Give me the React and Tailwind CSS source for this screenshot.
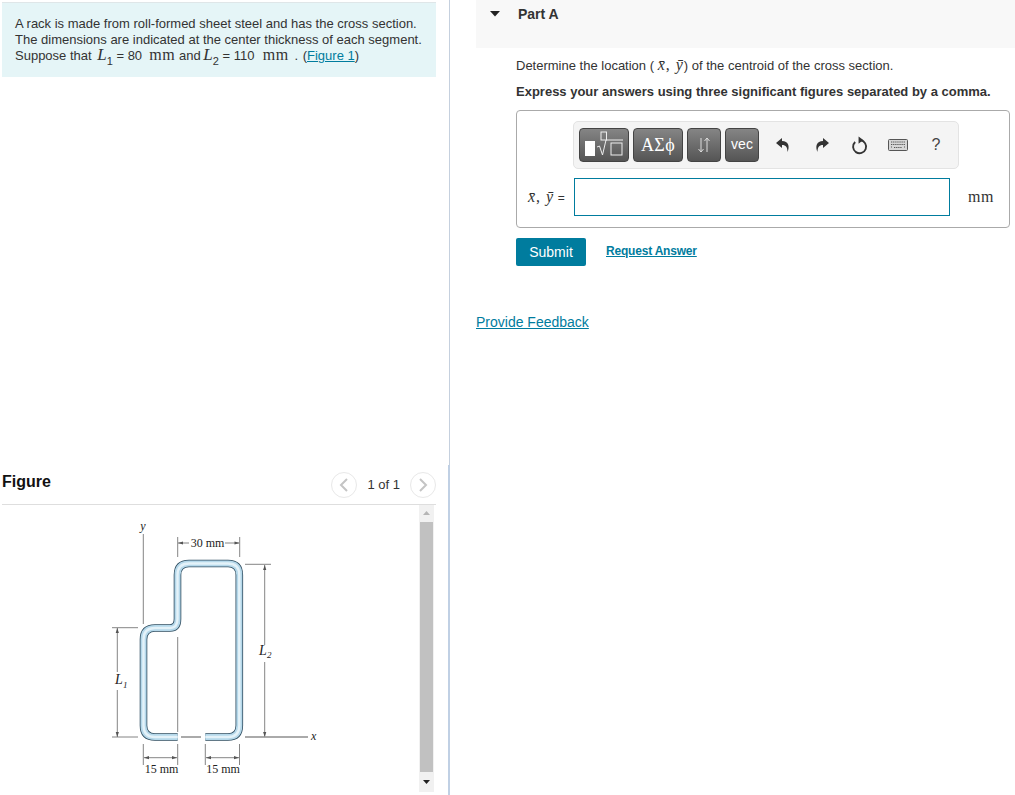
import React from "react";

const sans = "font-['Liberation_Sans',Arial,sans-serif]";
const serif = "font-['Liberation_Serif','Times_New_Roman',serif]";

function Mm({ className = "" }) {
  return <span className={`${serif} text-[16px] leading-none tracking-[0.6px] ${className}`}>mm</span>;
}

function L({ n, className = "" }) {
  return (
    <span className={`${serif} text-[17px] leading-none ${className}`}>
      <i>L</i>
      <sub className={`${sans} text-[11px] align-[-2px] leading-none`}>{n}</sub>
    </span>
  );
}

function XY({ size = "text-[16px]" }) {
  return (
    <span className={`${serif} ${size} tracking-[1px] leading-none`}>
      <i>{"x\u0304"}</i>, <i>{"y\u0304"}</i>
    </span>
  );
}

function Pager({ dir }) {
  return (
    <span className="w-[26px] h-[26px] rounded-full border border-[#e8e8e8] flex items-center justify-center">
      <svg width="12" height="16" viewBox="0 0 12 16" fill="none" stroke="#c4c4c4" strokeWidth="2">
        {dir === "left" ? <polyline points="9,2 3,8 9,14" /> : <polyline points="3,2 9,8 3,14" />}
      </svg>
    </span>
  );
}

function Dim({ d, gray }) {
  return <path d={d} fill="none" stroke={gray ? "#8f8f8f" : "#666"} strokeWidth={gray ? 1.4 : 0.8} />;
}

function Figure() {
  const center =
    "M177.7 737 H155 Q143.5 737 143.5 725.5 V639.5 Q143.5 628 155 628 H170 Q177.5 628 177.5 619 V575 Q177.5 563.5 189 563.5 H228 Q239.3 563.5 239.3 575 V725.5 Q239.3 737 228 737 H205.3";
  const txt = { fontFamily: "'Liberation Serif',serif", fill: "#222" };
  return (
    <svg width="418" height="290" viewBox="0 505 418 290" className="block shrink-0">
      <Dim d="M143.3 534 V624" />
      <Dim d="M177.7 537 V557 M239.7 537 V557 M178 543 H189 M225 543 H239" />
      <path d="M178 543 l5 -1.6 v3.2 z M239.5 543 l-5 -1.6 v3.2 z" fill="#555" />
      <Dim d="M245 564.3 H271 M264.7 565 V645 M264.7 662 V737" />
      <path d="M264.7 565 l-1.6 5 h3.2 z M264.7 737 l-1.6 -5 h3.2 z" fill="#555" />
      <Dim d="M112 627.7 H138 M117.3 628 V672 M117.3 690 V737 M112 737 H138 M177.7 637 V732" />
      <path d="M117.3 628 l-1.6 5 h3.2 z M117.3 737 l-1.6 -5 h3.2 z" fill="#555" />
      <Dim gray d="M181 737 H201 M245 737 H308" />
      <Dim d="M143.3 744 V765 M177.7 744 V765 M205.3 744 V765 M239.5 744 V765 M144 757.7 H177 M206 757.7 H239" />
      <path d="M144 757.7 l5 -1.6 v3.2 z M177 757.7 l-5 -1.6 v3.2 z M206 757.7 l5 -1.6 v3.2 z M239 757.7 l-5 -1.6 v3.2 z" fill="#555" />
      <path d={center} fill="none" stroke="#2f4d60" strokeWidth="7.6" />
      <path d={center} fill="none" stroke="#b5d8ea" strokeWidth="6" />
      <path d={center} fill="none" stroke="#e4f2f9" strokeWidth="2.4" />
      <text x="143" y="530" fontSize="12" fontStyle="italic" textAnchor="middle" style={txt}>y</text>
      <text x="207.5" y="547" fontSize="12" textAnchor="middle" style={txt}>30 mm</text>
      <text x="259" y="655" fontSize="14" fontStyle="italic" style={txt}>L</text>
      <text x="267" y="658" fontSize="9" fontStyle="italic" style={txt}>2</text>
      <text x="115" y="684" fontSize="14" fontStyle="italic" style={txt}>L</text>
      <text x="123" y="688" fontSize="9" fontStyle="italic" style={txt}>1</text>
      <text x="311" y="740" fontSize="12" fontStyle="italic" style={txt}>x</text>
      <text x="161.5" y="773" fontSize="12" textAnchor="middle" style={txt}>15 mm</text>
      <text x="223" y="773" fontSize="12" textAnchor="middle" style={txt}>15 mm</text>
    </svg>
  );
}

function ToolBtn({ className = "", children }) {
  return (
    <span
      className={`h-[34px] rounded-[4px] border border-[#444] bg-gradient-to-b from-[#858585] to-[#555] flex items-center justify-center text-white shrink-0 ${className}`}
    >
      {children}
    </span>
  );
}

function Toolbar() {
  return (
    <div className="ml-[56px] w-[386px] h-[48px] rounded-[5px] border border-[#e3e3e3] bg-[#f4f4f4] flex items-center pl-[5px] text-[#333]">
      <ToolBtn className="w-[50px]">
        <svg width="44" height="30" viewBox="0 0 44 30" fill="none">
          <rect x="3" y="11" width="10" height="15" fill="#fff" />
          <rect x="19" y="2" width="5.5" height="8" stroke="#eee" strokeWidth="1" />
          <path d="M15 17 l2.5 -1 l3 9 l3.5 -15 h17" stroke="#eee" strokeWidth="1" />
          <rect x="29" y="13" width="11" height="12" stroke="#eee" strokeWidth="1" />
        </svg>
      </ToolBtn>
      <ToolBtn className={`w-[50px] ml-[4px] ${serif} text-[18px] tracking-[0.4px] text-[#e4e4e4]`}>ΑΣϕ</ToolBtn>
      <ToolBtn className="w-[34px] ml-[4px]">
        <svg width="16" height="18" viewBox="0 0 16 18" fill="none" stroke="#ddd" strokeWidth="1">
          <path d="M5 2 V16 M2.5 13 L5 16 L7.5 13 M11 16 V2 M8.5 5 L11 2 L13.5 5" />
        </svg>
      </ToolBtn>
      <ToolBtn className={`w-[34px] ml-[4px] text-[14px] ${sans} pb-[2px] text-[#eee]`}>vec</ToolBtn>
      <span className="w-[17px] flex justify-center ml-[15px]">
        <svg width="14" height="16" viewBox="0 0 14 16">
          <path d="M6 1 L0 6 L6 11 V8 C10 8 11.5 10.5 11.5 15 C14 9.5 12.5 4 6 4 Z" fill="#333" />
        </svg>
      </span>
      <span className="w-[17px] flex justify-center ml-[22px]">
        <svg width="14" height="16" viewBox="0 0 14 16" className="-scale-x-100">
          <path d="M6 1 L0 6 L6 11 V8 C10 8 11.5 10.5 11.5 15 C14 9.5 12.5 4 6 4 Z" fill="#333" />
        </svg>
      </span>
      <span className="w-[17px] flex justify-center ml-[21px]">
        <svg width="18" height="20" viewBox="0 0 18 20" fill="none">
          <path d="M10 5 A6.9 6.9 0 1 1 4.4 6.8" stroke="#333" strokeWidth="2" />
          <path d="M8 1 L13 4.8 L8 8.6 Z" fill="#333" />
        </svg>
      </span>
      <span className="w-[20px] flex justify-center ml-[20px]">
        <svg width="20" height="12" viewBox="0 0 20 12">
          <rect x="0.5" y="0.5" width="19" height="11" rx="1" fill="#d6d6d6" stroke="#555" />
          <path d="M3 3 H17 M3 5.5 H17 M3 8 H4 M6 8.5 H14 M16 8 H17" stroke="#555" strokeWidth="1.2" strokeDasharray="1.3 0.8" />
        </svg>
      </span>
      <span className={`ml-[21px] w-[14px] text-center text-[16px] ${sans} text-[#444]`}>?</span>
    </div>
  );
}

export default function App() {
  return (
    <div className={`w-[1015px] h-[795px] overflow-hidden bg-white flex ${sans} text-[#333]`}>
      <div className="w-[450px] h-full shrink-0 relative border-r border-[#c5d0de] pt-[2px]">
        <div className="ml-[2px] w-[434px] h-[75px] bg-[#e5f5f7] border-t border-[#dfe6e8] pl-[13px] pt-[13px] text-[13px] leading-[16px]">
          <p className="h-[16px]">A rack is made from roll-formed sheet steel and has the cross section.</p>
          <p className="h-[16px]">The dimensions are indicated at the center thickness of each segment.</p>
          <p className="h-[16px] -mt-[2px] whitespace-nowrap">
            Suppose that <L n="1" className="ml-[2px]" /> = 80 &nbsp;<Mm /> and <L n="2" className="-ml-[1px]" /> = 110 &nbsp;<Mm className="ml-[1px]" /> <span className="ml-[2px]">.</span> <span className="ml-[1px]">(</span>
            <a className="text-[#007c9e] underline">Figure 1</a>)
          </p>
        </div>

        <div className="mt-[393px] ml-[2px] w-[434px] h-[34px] flex items-center pb-[5px]">
          <span className="text-[16px] font-bold text-[#111] flex-1 mb-[6px]">Figure</span>
          <Pager dir="left" />
          <span className="mx-[10px] mt-[1px] text-[13px]">1 of 1</span>
          <Pager dir="right" />
        </div>

        <div className="ml-[2px] w-[434px] border-t border-[#dedede] flex h-[290px]">
          <div className="-ml-[2px]"><Figure /></div>
          <div className="ml-[1px] w-[15px] h-[287px] bg-[#f1f1f1] flex flex-col items-center">
            <svg width="9" height="17" viewBox="0 0 9 17" className="shrink-0"><path d="M1 10 H8 L4.5 6 Z" fill="#b5b5b5" /></svg>
            <div className="w-[13px] h-[250px] bg-[#c1c1c1] shrink-0" />
            <svg width="9" height="20" viewBox="0 0 9 20" className="shrink-0"><path d="M1 8 H8 L4.5 12 Z" fill="#222" /></svg>
          </div>
        </div>
        <div className="absolute right-[-1px] top-[465px] w-[2px] h-[330px] bg-[#c0d0e4]" />
      </div>

      <div className="flex-1 pl-[26px] min-w-0">
        <div className="h-[48px] bg-[#f8f8f8] flex items-start">
          <svg width="10" height="16" viewBox="0 0 10 16" className="ml-[14px] mt-[6px]"><path d="M0 5 H10 L5 10.5 Z" fill="#222" /></svg>
          <span className="ml-[18px] mt-[4px] text-[14px] font-bold text-[#333]">Part A</span>
        </div>

        <div className="pl-[40px]">
          <p className="mt-[9px] h-[18px] text-[13px] leading-[18px] whitespace-nowrap">
            Determine the location ( <XY />) of the centroid of the cross section.
          </p>
          <p className="mt-[8px] h-[18px] text-[13px] leading-[18px] font-bold whitespace-nowrap">
            Express your answers using three significant figures separated by a comma.
          </p>

          <div className="mt-[9px] w-[494px] h-[118px] border border-[#aaa] rounded-[4px] pt-[10px]">
            <Toolbar />
            <div className="mt-[9px] flex items-center">
              <span className="ml-[11px] w-[46px] whitespace-nowrap text-[13px] leading-none">
                <XY /> <span className={sans + " text-[12px]"}>=</span>
              </span>
              <div className="w-[376px] h-[38px] border border-[#007c9e] bg-white" />
              <Mm className="ml-[18px]" />
            </div>
          </div>

          <div className="mt-[10px] flex items-start">
            <button className="w-[70px] h-[28px] bg-[#007c9e] rounded-[2px] text-white text-[14px]">Submit</button>
            <a className="ml-[20px] mt-[4px] text-[12px] leading-[18px] font-bold text-[#007c9e] underline whitespace-nowrap tracking-[-0.2px]">Request Answer</a>
          </div>
        </div>

        <a className="block mt-[46px] text-[14px] leading-[20px] text-[#007c9e] underline whitespace-nowrap">Provide Feedback</a>
      </div>
    </div>
  );
}
